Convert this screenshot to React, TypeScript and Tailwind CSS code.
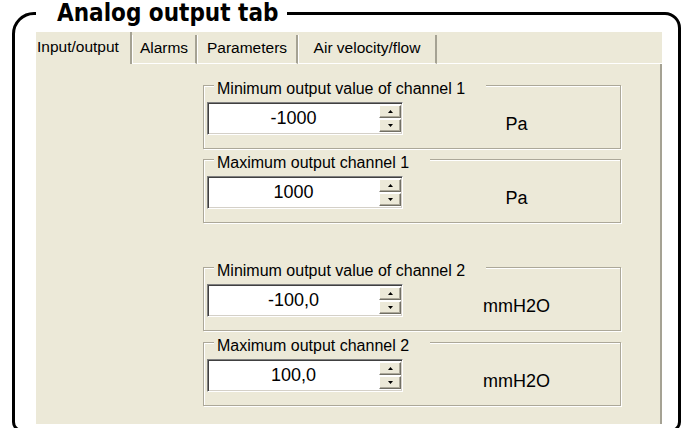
import React from 'react';

const tabs = ['Input/output', 'Alarms', 'Parameters', 'Air velocity/flow'];
const tabWidths = ['w-[96px]', 'w-[65px]', 'w-[101px]', 'w-[139px]'];

type Group = { label: string; value: string; unit: string; gap: string };

const groups: Group[] = [
  { label: 'Minimum output value of channel 1', value: '-1000', unit: 'Pa', gap: 'mt-[21px]' },
  { label: 'Maximum output channel 1', value: '1000', unit: 'Pa', gap: 'mt-[10px]' },
  { label: 'Minimum output value of channel 2', value: '-100,0', unit: 'mmH2O', gap: 'mt-[44px]' },
  { label: 'Maximum output channel 2', value: '100,0', unit: 'mmH2O', gap: 'mt-[11px]' },
];

const SpinButton: React.FC<{ up?: boolean }> = ({ up }) => (
  <div className="h-[13px] flex items-center justify-center bg-[#ECE9D8] border border-t-white border-l-white border-b-[#716f64] border-r-[#716f64] shadow-[inset_-1px_-1px_0_#aca899]">
    <svg width="5" height="3" viewBox="0 0 5 3">
      {up ? <path d="M2.5 0 L5 3 L0 3 Z" fill="#000" /> : <path d="M0 0 L5 0 L2.5 3 Z" fill="#000" />}
    </svg>
  </div>
);

const SpinInput: React.FC<{ value: string }> = ({ value }) => (
  <div className="ml-[3px] w-[196px] h-[33px] flex bg-white border border-t-[#808080] border-l-[#808080] border-b-white border-r-white shadow-[inset_1px_1px_0_#404040,inset_-1px_-1px_0_#d4d0c8]">
    <div className="flex-1 text-center text-[18px] leading-[31px] text-black">{value}</div>
    <div className="w-[22px] mr-[1px] flex flex-col gap-[1px] py-[2px]">
      <SpinButton up />
      <SpinButton />
    </div>
  </div>
);

const GroupBox: React.FC<{ group: Group }> = ({ group }) => (
  <div
    className={`${group.gap} ml-[167px] w-[418px] pb-[13px] border border-[#aca899] shadow-[inset_1px_1px_0_#fff,1px_1px_0_#fff]`}
  >
    <div className="w-fit -mt-[6px] ml-[10px] pl-[3px] pr-[21px] bg-[#ECE9D8] text-[16px] leading-[18px] text-black">
      {group.label}
    </div>
    <div className="mt-[4px] flex">
      <SpinInput value={group.value} />
      {/* unit text sits a little below the field's middle */}
      <div className="flex-1 h-[33px] pl-[10px] flex items-end justify-center text-[18px] leading-[22px] text-black">
        {group.unit}
      </div>
    </div>
  </div>
);

export default function App() {
  return (
    <div className="w-[688px] h-[428px] overflow-hidden bg-white pl-[12px] pt-[12px] font-['Liberation_Sans',Arial,sans-serif]">
      <div className="w-[669px] h-[420px] border-[3px] border-black rounded-tl-[22px] rounded-tr-[16px] rounded-b-[10px]">
        <div className="w-fit -mt-[14px] ml-[21px] pl-[21px] pr-[9px] bg-white text-[24px] leading-[24px] font-bold text-black font-['DejaVu_Sans_Condensed','DejaVu_Sans',sans-serif]">
          Analog output tab
        </div>

        <div className="mt-[7px] ml-[21px] w-[626px] h-[392px] bg-[#ECE9D8] flex flex-col">
          {/* Tab strip */}
          <div className="h-[32px] flex items-end">
            {tabs.map((tab, i) =>
              i === 0 ? (
                <div
                  key={tab}
                  className={`${tabWidths[i]} h-[32px] pt-[6px] pl-px border-r-2 border-r-[#a5a293] text-[15.5px] leading-[18px] text-black`}
                >
                  {tab}
                </div>
              ) : (
                <div
                  key={tab}
                  className={`${tabWidths[i]} h-[29px] pt-[4px] text-center border-l border-l-white border-r-2 border-r-[#a5a293] border-b border-b-white text-[15.5px] leading-[18px] text-black`}
                >
                  {tab}
                </div>
              )
            )}
            <div className="flex-1 h-[29px] border-b border-b-white" />
          </div>

          {/* Tab page */}
          <div className="flex-1 border-r-2 border-r-[#a5a293]">
            {groups.map((g) => (
              <GroupBox key={g.label} group={g} />
            ))}
          </div>
        </div>
      </div>
    </div>
  );
}
